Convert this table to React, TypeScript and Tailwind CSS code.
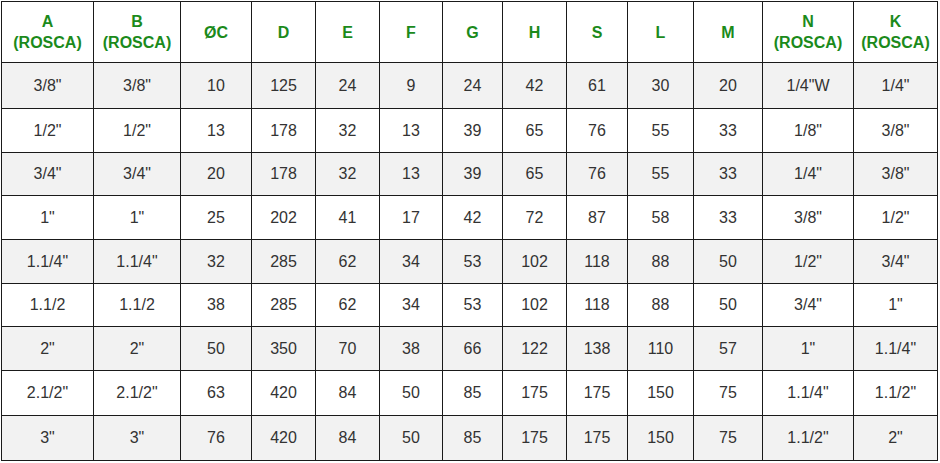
const widths = [
  'w-[92px]', 'w-[87px]', 'w-[71px]', 'w-[64px]', 'w-[64px]', 'w-[63px]', 'w-[60px]',
  'w-[64px]', 'w-[61px]', 'w-[66px]', 'w-[69px]', 'w-[91px]', 'w-[84px]',
];

// row heights as measured from the reference grid lines
const heights = [
  'h-[46px]', 'h-[44px]', 'h-[43px]', 'h-[44px]', 'h-[44px]',
  'h-[43px]', 'h-[44px]', 'h-[45px]', 'h-[45px]',
];

const headers: [string, string?][] = [
  ['A', '(ROSCA)'], ['B', '(ROSCA)'], ['ØC'], ['D'], ['E'], ['F'], ['G'],
  ['H'], ['S'], ['L'], ['M'], ['N', '(ROSCA)'], ['K', '(ROSCA)'],
];

const rows: string[][] = [
  ['3/8"', '3/8"', '10', '125', '24', '9', '24', '42', '61', '30', '20', '1/4"W', '1/4"'],
  ['1/2"', '1/2"', '13', '178', '32', '13', '39', '65', '76', '55', '33', '1/8"', '3/8"'],
  ['3/4"', '3/4"', '20', '178', '32', '13', '39', '65', '76', '55', '33', '1/4"', '3/8"'],
  ['1"', '1"', '25', '202', '41', '17', '42', '72', '87', '58', '33', '3/8"', '1/2"'],
  ['1.1/4"', '1.1/4"', '32', '285', '62', '34', '53', '102', '118', '88', '50', '1/2"', '3/4"'],
  ['1.1/2', '1.1/2', '38', '285', '62', '34', '53', '102', '118', '88', '50', '3/4"', '1"'],
  ['2"', '2"', '50', '350', '70', '38', '66', '122', '138', '110', '57', '1"', '1.1/4"'],
  ['2.1/2"', '2.1/2"', '63', '420', '84', '50', '85', '175', '175', '150', '75', '1.1/4"', '1.1/2"'],
  ['3"', '3"', '76', '420', '84', '50', '85', '175', '175', '150', '75', '1.1/2"', '2"'],
];

export default function App() {
  return (
    <div className="w-[940px] h-[463px] bg-white pt-px pl-px font-['Liberation_Sans',Arial,sans-serif]">
      <table className="table-fixed border-collapse border border-[#1a1a1a]">
        <colgroup>
          {widths.map((w, i) => (
            <col key={i} className={w} />
          ))}
        </colgroup>
        <thead>
          <tr className="h-[61px] bg-white">
            {headers.map(([top, bottom], i) => (
              <th
                key={i}
                className="border border-[#1a1a1a] p-0 text-center align-middle text-[16px] leading-[21px] font-bold text-[#1b8a1b]"
              >
                {top}
                {bottom && <br />}
                {bottom}
              </th>
            ))}
          </tr>
        </thead>
        <tbody>
          {rows.map((row, r) => (
            <tr
              key={r}
              className={`${heights[r]} ${r % 2 === 0 ? 'bg-[#f2f2f2]' : 'bg-white'}`}
            >
              {row.map((cell, c) => (
                <td
                  key={c}
                  className="border border-[#1a1a1a] p-0 text-center align-middle text-[16px] text-[#333]"
                >
                  {cell}
                </td>
              ))}
            </tr>
          ))}
        </tbody>
      </table>
    </div>
  );
}
